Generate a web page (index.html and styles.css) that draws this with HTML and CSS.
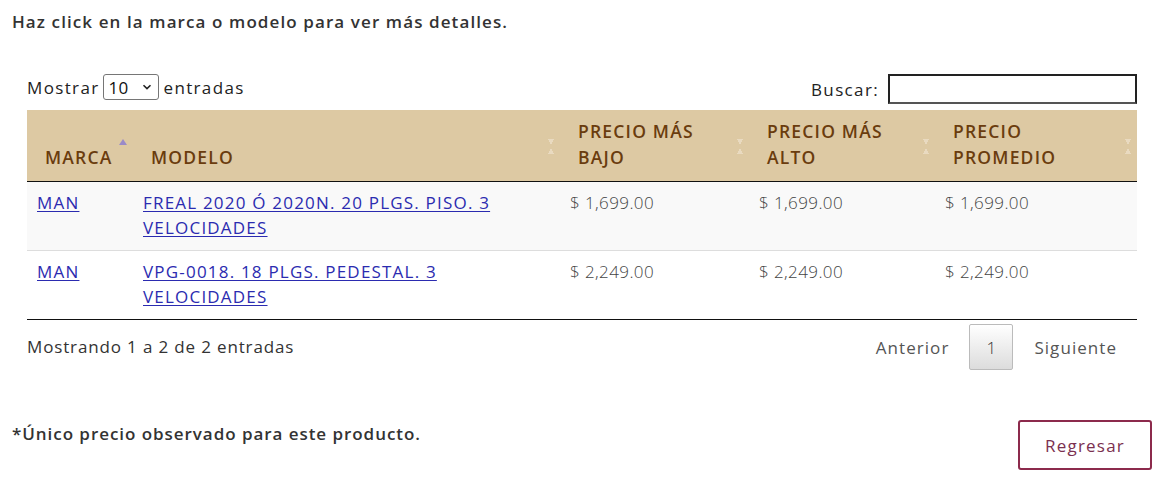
FILE: index.html
```html
<!DOCTYPE html>
<html lang="es">
<head>
<meta charset="utf-8">
<link rel="stylesheet" href="styles.css">
</head>
<body>
<div class="page">
  <p class="intro">Haz click en la marca o modelo para ver más detalles.</p>
  <div class="dt-wrapper">
    <div class="dt-top">
      <label class="dt-length">Mostrar <span class="select">10<svg width="10" height="6" viewBox="0 0 10 6"><path d="M1.5 1.2 5 4.6 8.5 1.2" fill="none" stroke="#222" stroke-width="1.6"/></svg></span> entradas</label>
      <label class="dt-filter">Buscar: <span class="search"></span></label>
    </div>
    <table class="dt">
      <colgroup>
        <col class="c1"><col class="c2"><col class="c3"><col class="c4"><col class="c5">
      </colgroup>
      <thead>
        <tr>
          <th class="asc">MARCA</th>
          <th class="both">MODELO</th>
          <th class="both">PRECIO MÁS<br>BAJO</th>
          <th class="both">PRECIO MÁS<br>ALTO</th>
          <th class="both">PRECIO<br>PROMEDIO</th>
        </tr>
      </thead>
      <tbody>
        <tr class="odd">
          <td><a href="#">MAN</a></td>
          <td><a href="#">FREAL 2020 Ó 2020N. 20 PLGS. PISO. 3 VELOCIDADES</a></td>
          <td class="num">$ 1,699.00</td>
          <td class="num">$ 1,699.00</td>
          <td class="num">$ 1,699.00</td>
        </tr>
        <tr class="even">
          <td><a href="#">MAN</a></td>
          <td><a href="#">VPG-0018. 18 PLGS. PEDESTAL. 3 VELOCIDADES</a></td>
          <td class="num">$ 2,249.00</td>
          <td class="num">$ 2,249.00</td>
          <td class="num">$ 2,249.00</td>
        </tr>
      </tbody>
    </table>
    <div class="dt-bottom">
      <div class="dt-info">Mostrando 1 a 2 de 2 entradas</div>
      <div class="dt-paginate">
        <span class="pg-link">Anterior</span>
        <span class="pg-current">1</span>
        <span class="pg-link">Siguiente</span>
      </div>
    </div>
  </div>
  <div class="footer">
    <p class="note">*Único precio observado para este producto.</p>
    <button class="btn-back">Regresar</button>
  </div>
</div>
</body>
</html>
```

FILE: styles.css
```css
* { box-sizing: border-box; }
html, body { margin: 0; padding: 0; background: #fff; }
body {
  font-family: "Open Sans", "DejaVu Sans", sans-serif;
  color: #333;
  font-size: 17px;
}
.page { padding: 0 12px; }
.intro {
  margin: 0;
  padding-top: 10px;
  font-size: 17px;
  font-weight: 600;
  letter-spacing: 1.1px;
  line-height: 24px;
  color: #333;
}
.dt-wrapper { margin: 40px 18px 0 15px; width: 1110px; }
.dt-top {
  display: flex;
  justify-content: space-between;
  align-items: flex-start;
  height: 36px;
}
.dt-length, .dt-filter {
  display: flex; align-items: center;
  font-size: 17px; font-weight: 500; letter-spacing: 1.35px; color: #222;
}
.dt-length { height: 26px; }
.dt-filter { height: 30px; }
.select {
  display: inline-flex; align-items: center; justify-content: space-between;
  width: 56px; height: 26px; margin: 0 4px 0 4px;
  padding: 0 6px 0 4px;
  border: 1px solid #767676; border-radius: 3px;
  font-size: 17px; letter-spacing: 0.3px; color: #111; background: #fff;
}
.search {
  display: inline-block; width: 249px; height: 30px; margin-left: 9px;
  border: 2px solid #222; border-bottom-color: #555; background: #fff;
}
table.dt {
  width: 1110px;
  border-collapse: collapse;
  table-layout: fixed;
}
col.c1 { width: 106px; }
col.c2 { width: 427px; }
col.c3 { width: 189px; }
col.c4 { width: 186px; }
col.c5 { width: 202px; }
thead th {
  background: #ddc9a3;
  color: #6a3c0e;
  font-weight: 600;
  font-size: 17.5px;
  letter-spacing: 1.2px;
  line-height: 26px;
  text-align: left;
  vertical-align: bottom;
  padding: 8px 18px 11px 18px;
  border-bottom: 1px solid #111;
  position: relative;
}
thead th.both::after {
  content: "";
  position: absolute;
  right: 6px; top: 29px;
  width: 6px; height: 16px;
  background:
    linear-gradient(to top right, transparent 50%, #e9dac0 50%) 0 0 / 3px 6px no-repeat,
    linear-gradient(to top left, transparent 50%, #e9dac0 50%) 3px 0 / 3px 6px no-repeat,
    linear-gradient(to bottom right, transparent 50%, #e9dac0 50%) 0 9px / 3px 6px no-repeat,
    linear-gradient(to bottom left, transparent 50%, #e9dac0 50%) 3px 9px / 3px 6px no-repeat;
}
thead th.asc::after {
  content: "";
  position: absolute;
  right: 6px; top: 29px;
  width: 0; height: 0;
  border-left: 4px solid transparent;
  border-right: 4px solid transparent;
  border-bottom: 6px solid #9a8ac8;
}
tbody td {
  padding: 8px 10px 10px 10px;
  line-height: 25px;
  vertical-align: top;
  font-size: 17px;
  letter-spacing: 0.4px;
  color: #444;
  font-weight: 400;
}
tbody td a { letter-spacing: 1.2px; }
tbody tr.odd td { background: #f9f9f9; border-bottom: 1px solid #ddd; }
tbody tr.even td { background: #fff; border-bottom: 1px solid #111; }
tbody a { color: #2b2bb0; text-decoration: underline; text-underline-offset: 2px; }
td.num { color: #444; font-weight: 300; }
.dt-bottom {
  display: flex; justify-content: space-between; align-items: flex-start;
  padding-top: 4px;
}
.dt-info { padding-top: 11px; font-size: 17px; font-weight: 400; color: #333; letter-spacing: 0.85px; }
.dt-paginate { display: flex; align-items: center; margin-right: 0; }
.pg-link { font-size: 17px; color: #555; padding: 0 20px 0 21px; letter-spacing: 1.05px; font-weight: 400; }
.pg-current {
  display: inline-flex; align-items: center; justify-content: center;
  width: 44px; height: 46px;
  border: 1px solid #bbb; border-radius: 2px;
  background: linear-gradient(#fff, #dcdcdc);
  color: #333; font-size: 17px; font-weight: 300;
}
.footer {
  display: flex; justify-content: space-between; align-items: flex-start;
  margin-top: 50px;
}
.note {
  margin: 0; padding-top: 2px;
  font-size: 17px; font-weight: 600; letter-spacing: 0.95px; color: #333; line-height: 24px;
}
.btn-back {
  width: 134px; height: 50px;
  margin-right: 3px; margin-top: 0;
  border: 2px solid #8c2a4c; border-radius: 3px; background: #fff;
  color: #7b3050; font-family: inherit; font-size: 17px; letter-spacing: 1.2px;
}
```
